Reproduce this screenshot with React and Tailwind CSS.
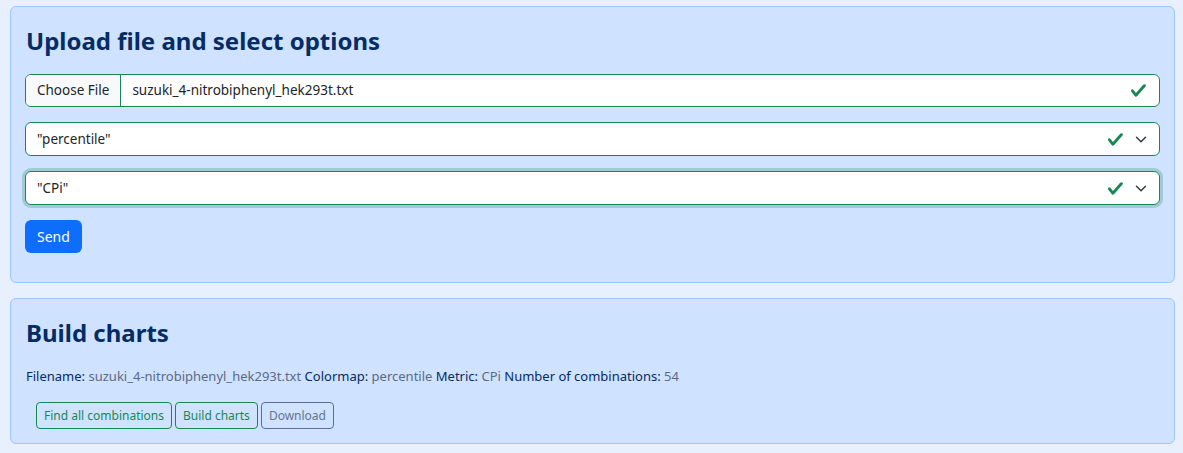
import React from 'react';

function Check() {
  return (
    <svg width="17" height="17" viewBox="0 0 8 8" className="shrink-0">
      <path
        fill="#198754"
        d="M2.3 6.73.6 4.53c-.4-1.04.46-1.4 1.1-.8l1.1 1.4 3.4-3.8c.6-.63 1.6-.27 1.2.7l-4 4.6c-.43.5-.8.4-1.1.1z"
      />
    </svg>
  );
}

function Chevron() {
  return (
    <svg width="12" height="9" viewBox="0 0 16 12" className="shrink-0">
      <path fill="none" stroke="#343a40" strokeLinecap="round" strokeLinejoin="round" strokeWidth="2" d="m2 3 6 6 6-6" />
    </svg>
  );
}

function SelectBox({ value, focused }) {
  return (
    <div
      className={
        'flex items-center h-[34px] bg-white border border-[#198754] rounded-[6px] pl-[11px] pr-[12px] text-[13.5px] text-[#212529] ' +
        (focused ? 'shadow-[0_0_0_3px_rgba(25,135,84,0.25)]' : '')
      }
    >
      <span className="flex-1">{value}</span>
      <Check />
      <span className="ml-[11px]">
        <Chevron />
      </span>
    </div>
  );
}

export default function App() {
  const options = [
    { label: 'Filename:', value: 'suzuki_4-nitrobiphenyl_hek293t.txt' },
    { label: 'Colormap:', value: 'percentile' },
    { label: 'Metric:', value: 'CPi' },
    { label: 'Number of combinations:', value: '54' },
  ];

  return (
    <div className="min-h-[453px] bg-[#e8f0fe] pt-[6px] pl-[10px] pr-[8px] pb-[8px] font-['Noto_Sans',sans-serif]">
      <div className="bg-[#cfe2ff] border border-[#9ec5fe] rounded-[6px] px-[14px] pt-[19px] pb-[29px]">
        <h2 className="text-[24px] font-bold leading-[29px] text-[#052c65] mb-[19px] pl-[1px]">
          Upload file and select options
        </h2>
        <div className="flex flex-col gap-[15px]">
          <div className="flex items-stretch h-[33px] bg-white border border-[#198754] rounded-[6px] overflow-hidden text-[13.5px] text-[#212529]">
            <div className="flex items-center px-[11px] bg-[#f8f9fa] border-r border-[#198754]">Choose File</div>
            <div className="flex-1 flex items-center pl-[11px] pr-[12px]">
              <span className="flex-1">suzuki_4-nitrobiphenyl_hek293t.txt</span>
              <Check />
            </div>
          </div>
          <SelectBox value={'"percentile"'} />
          <SelectBox value={'"CPi"'} focused />
          <div>
            <button className="h-[33px] px-[12px] bg-[#0d6efd] text-white text-[14px] rounded-[6px]">Send</button>
          </div>
        </div>
      </div>

      <div className="mt-[15px] bg-[#cfe2ff] border border-[#9ec5fe] rounded-[6px] px-[14px] pt-[19px] pb-[14px]">
        <h2 className="text-[24px] font-bold leading-[29px] text-[#052c65] mb-[20px] pl-[1px]">Build charts</h2>
        <p className="text-[13px] text-[#052c65] pl-[1px] leading-[18px]">
          {options.map((o, i) => (
            <span key={o.label}>
              {o.label} <span className="text-[#5c6b84]">{o.value}</span>
              {i < options.length - 1 ? ' ' : ''}
            </span>
          ))}
        </p>
        <div className="flex gap-[3px] mt-[17px] pl-[11px]">
          <button className="h-[27px] px-[7px] text-[12px] text-[#198754] border border-[#198754] rounded-[4px]">
            Find all combinations
          </button>
          <button className="h-[27px] px-[7px] text-[12px] text-[#198754] border border-[#198754] rounded-[4px]">
            Build charts
          </button>
          <button className="h-[27px] px-[7px] text-[12px] text-[#67758f] border border-[#5b6e9b] rounded-[4px]">
            Download
          </button>
        </div>
      </div>
    </div>
  );
}
